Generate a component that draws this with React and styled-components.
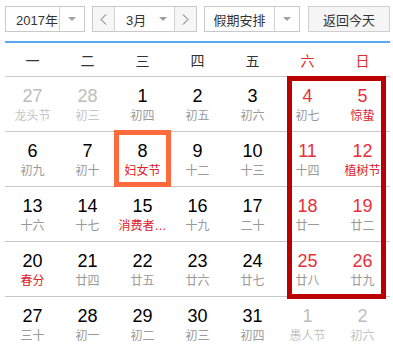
import React from 'react';
import styled, { createGlobalStyle } from 'styled-components';

const Global = createGlobalStyle`
  html, body { margin: 0; padding: 0; background: #fff; }
  body { font-family: "Liberation Sans", "Noto Sans CJK SC", sans-serif; }
`;

const Page = styled.div`
  width: 393px;
  height: 360px;
  box-sizing: border-box;
  padding: 6px 3px 0 5px;
  overflow: hidden;
`;

const Toolbar = styled.div`
  display: flex;
  height: 26px;
  margin-bottom: 9px;
`;

const Select = styled.div`
  display: flex;
  box-sizing: border-box;
  width: ${(p) => p.$w}px;
  margin-right: ${(p) => p.$mr}px;
  border: 1px solid #c9c9c9;
  background: #fff;
  color: #333;
  font-size: 13px;
`;

const Label = styled.div`
  flex: 1;
  display: flex;
  align-items: center;
  justify-content: ${(p) => (p.$start ? 'flex-start' : 'center')};
  padding-left: ${(p) => p.$pl || 0}px;
`;

const ArrowCell = styled.div`
  width: ${(p) => p.$w || 24}px;
  display: flex;
  align-items: center;
  justify-content: center;
  border-left: ${(p) => (p.$noBorder ? 'none' : '1px solid #d3d3d3')};
`;

const NavBtn = styled.div`
  width: 21px;
  display: flex;
  align-items: center;
  justify-content: center;
  background: #f6f6f6;
  border-${(p) => p.$side}: 1px solid #d3d3d3;
`;

const TodayBtn = styled.div`
  box-sizing: border-box;
  width: 82px;
  display: flex;
  align-items: center;
  justify-content: center;
  border: 1px solid #d0d0d0;
  background: #f5f5f5;
  color: #333;
  font-size: 13px;
`;

const Calendar = styled.div`
  position: relative;
  width: 385px;
  border-top: 2px solid #5aa9f2;
`;

const Header = styled.div`
  display: grid;
  grid-template-columns: repeat(7, 1fr);
  height: 33px;
  border-bottom: 1px solid #c8c8c8;
`;

const HeadCell = styled.div`
  display: flex;
  align-items: center;
  justify-content: center;
  font-size: 14px;
  color: ${(p) => (p.$red ? '#e52b2b' : '#333')};
`;

const Row = styled.div`
  display: grid;
  grid-template-columns: repeat(7, 1fr);
  height: 54px;
  border-bottom: ${(p) => (p.$last ? 'none' : '1px solid #c8c8c8')};
`;

const Cell = styled.div`
  position: relative;
  display: flex;
  flex-direction: column;
  align-items: center;
  padding-top: 9px;
`;

const Num = styled.div`
  font-size: 18px;
  line-height: 20px;
  color: ${(p) => (p.$other ? '#bdbdbd' : p.$red ? '#e8303a' : '#000')};
`;

const Lunar = styled.div`
  margin-top: 2px;
  font-size: 12px;
  line-height: 16px;
  white-space: nowrap;
  color: ${(p) => (p.$other ? '#c4c4c4' : p.$red ? '#e0202a' : '#999')};
`;

const TodayMark = styled.div`
  position: absolute;
  top: -2px;
  left: -1px;
  right: -1px;
  bottom: -1px;
  border: 5px solid #ff6b3d;
  pointer-events: none;
`;

const WeekendMark = styled.div`
  position: absolute;
  left: 282px;
  top: 33px;
  width: 99px;
  height: 223px;
  box-sizing: border-box;
  border: 5px solid #bb0000;
  pointer-events: none;
`;

const Tri = () => (
  <svg width="8" height="5" viewBox="0 0 8 5">
    <path d="M0 0 L8 0 L4 4 Z" fill="#a0a0a0" />
  </svg>
);

const Chevron = ({ dir }) => (
  <svg width="7" height="11" viewBox="0 0 7 11">
    <path
      d={dir === 'left' ? 'M6 0.5 L1 5.5 L6 10.5' : 'M1 0.5 L6 5.5 L1 10.5'}
      fill="none"
      stroke="#666"
      strokeWidth="1"
    />
  </svg>
);

const weeks = [
  [
    { n: 27, l: '龙头节', o: true },
    { n: 28, l: '初三', o: true },
    { n: 1, l: '初四' },
    { n: 2, l: '初五' },
    { n: 3, l: '初六' },
    { n: 4, l: '初七' },
    { n: 5, l: '惊蛰', h: true },
  ],
  [
    { n: 6, l: '初九' },
    { n: 7, l: '初十' },
    { n: 8, l: '妇女节', h: true, today: true },
    { n: 9, l: '十二' },
    { n: 10, l: '十三' },
    { n: 11, l: '十四' },
    { n: 12, l: '植树节', h: true },
  ],
  [
    { n: 13, l: '十六' },
    { n: 14, l: '十七' },
    { n: 15, l: '消费者…', h: true },
    { n: 16, l: '十九' },
    { n: 17, l: '二十' },
    { n: 18, l: '廿一' },
    { n: 19, l: '廿二' },
  ],
  [
    { n: 20, l: '春分', h: true },
    { n: 21, l: '廿四' },
    { n: 22, l: '廿五' },
    { n: 23, l: '廿六' },
    { n: 24, l: '廿七' },
    { n: 25, l: '廿八' },
    { n: 26, l: '廿九' },
  ],
  [
    { n: 27, l: '三十' },
    { n: 28, l: '初一' },
    { n: 29, l: '初二' },
    { n: 30, l: '初三' },
    { n: 31, l: '初四' },
    { n: 1, l: '愚人节', o: true },
    { n: 2, l: '初六', o: true },
  ],
];

const heads = ['一', '二', '三', '四', '五', '六', '日'];

export default function App() {
  return (
    <Page>
      <Global />
      <Toolbar>
        <Select $w={80} $mr={7}>
          <Label $start $pl={10}>2017年</Label>
          <ArrowCell><Tri /></ArrowCell>
        </Select>
        <Select $w={105} $mr={7}>
          <NavBtn $side="right"><Chevron dir="left" /></NavBtn>
          <Label $start $pl={11}>3月</Label>
          <ArrowCell $noBorder $w={22}><Tri /></ArrowCell>
          <NavBtn $side="left"><Chevron dir="right" /></NavBtn>
        </Select>
        <Select $w={96} $mr={8}>
          <Label>假期安排</Label>
          <ArrowCell><Tri /></ArrowCell>
        </Select>
        <TodayBtn>返回今天</TodayBtn>
      </Toolbar>
      <Calendar>
        <Header>
          {heads.map((h, i) => (
            <HeadCell key={h} $red={i >= 5}>{h}</HeadCell>
          ))}
        </Header>
        {weeks.map((w, wi) => (
          <Row key={wi} $last={wi === weeks.length - 1}>
            {w.map((d, di) => (
              <Cell key={di}>
                <Num $other={d.o} $red={!d.o && di >= 5}>{d.n}</Num>
                <Lunar $other={d.o} $red={d.h}>{d.l}</Lunar>
                {d.today && <TodayMark />}
              </Cell>
            ))}
          </Row>
        ))}
        <WeekendMark />
      </Calendar>
    </Page>
  );
}
